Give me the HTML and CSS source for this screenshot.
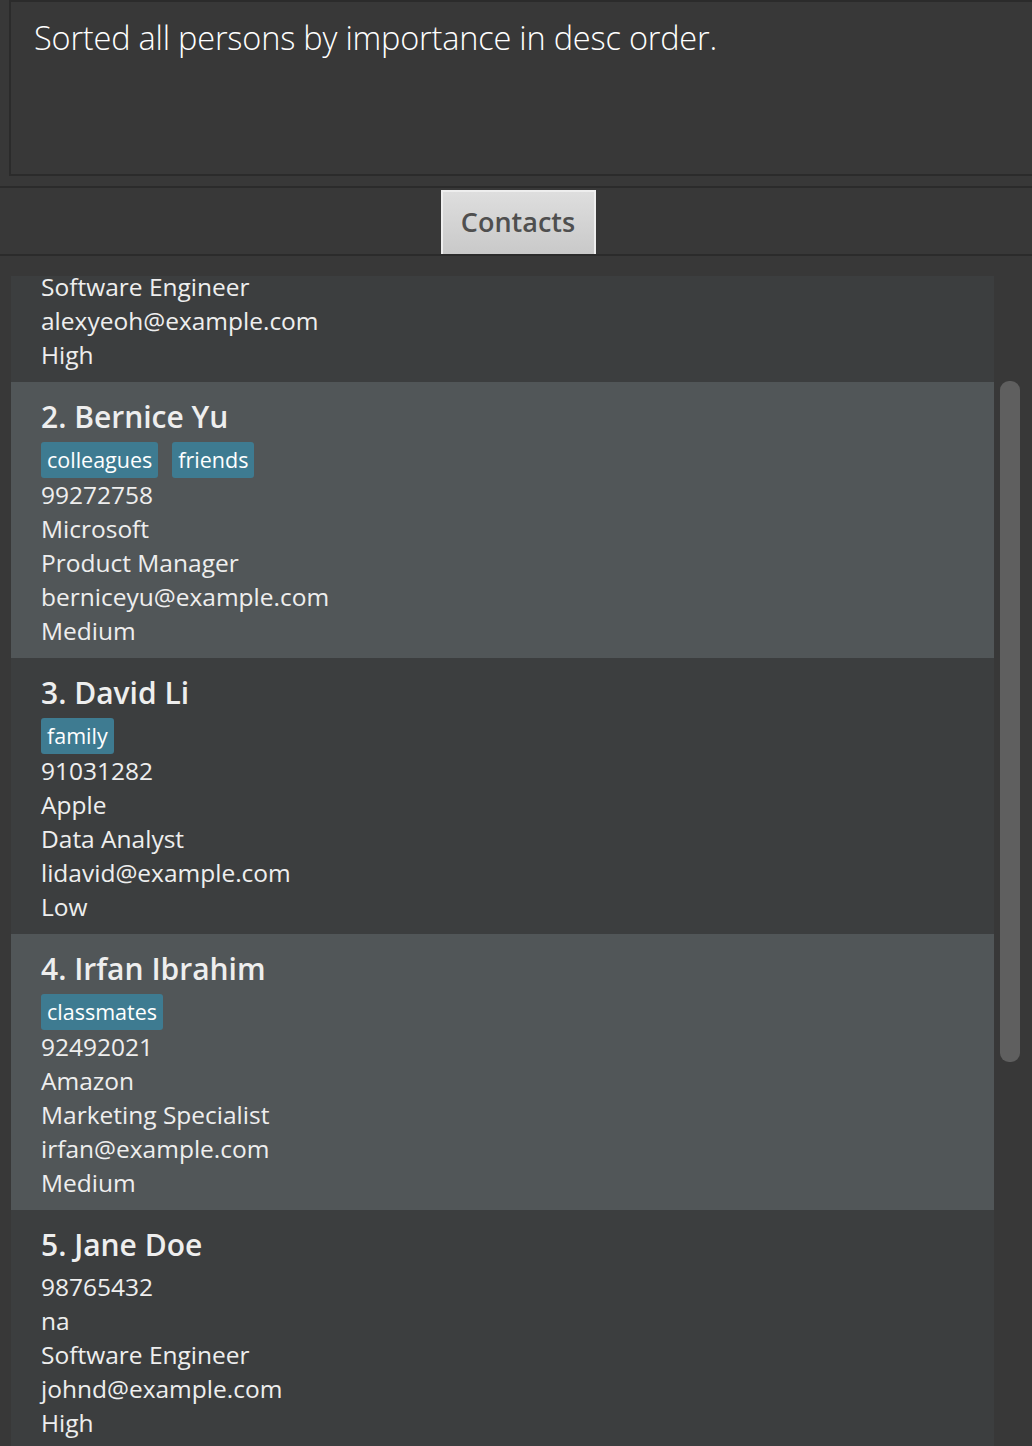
FILE: index.html
```html
<!DOCTYPE html>
<html>
<head>
<meta charset="utf-8">
<link rel="stylesheet" href="styles.css">
</head>
<body>
<div class="app">
  <div class="result-wrap">
    <div class="result">Sorted all persons by importance in desc order.</div>
  </div>
  <div class="tabbar">
    <div class="tab">Contacts</div>
  </div>
  <div class="list-area">
    <div class="list">
      <div class="card dark partial">
        <div class="line">Software Engineer</div>
        <div class="line">alexyeoh@example.com</div>
        <div class="line">High</div>
      </div>
      <div class="card light">
        <div class="name">2. Bernice Yu</div>
        <div class="details">
          <div class="tags"><span class="tag">colleagues</span><span class="tag">friends</span></div>
          <div class="line">99272758</div>
          <div class="line">Microsoft</div>
          <div class="line">Product Manager</div>
          <div class="line">berniceyu@example.com</div>
          <div class="line">Medium</div>
        </div>
      </div>
      <div class="card dark">
        <div class="name">3. David Li</div>
        <div class="details">
          <div class="tags"><span class="tag">family</span></div>
          <div class="line">91031282</div>
          <div class="line">Apple</div>
          <div class="line">Data Analyst</div>
          <div class="line">lidavid@example.com</div>
          <div class="line">Low</div>
        </div>
      </div>
      <div class="card light">
        <div class="name">4. Irfan Ibrahim</div>
        <div class="details">
          <div class="tags"><span class="tag">classmates</span></div>
          <div class="line">92492021</div>
          <div class="line">Amazon</div>
          <div class="line">Marketing Specialist</div>
          <div class="line">irfan@example.com</div>
          <div class="line">Medium</div>
        </div>
      </div>
      <div class="card dark">
        <div class="name">5. Jane Doe</div>
        <div class="details">
          <div class="line">98765432</div>
          <div class="line">na</div>
          <div class="line">Software Engineer</div>
          <div class="line">johnd@example.com</div>
          <div class="line">High</div>
        </div>
      </div>
    </div>
    <div class="scroll-track">
      <div class="thumb"></div>
    </div>
  </div>
</div>
</body>
</html>
```
FILE: styles.css
```css
html, body {
  margin: 0;
  padding: 0;
  background: #383838;
  height: 100%;
  overflow: hidden;
}
.app {
  width: 1032px;
  height: 1446px;
  display: flex;
  flex-direction: column;
  font-family: "Open Sans", "Noto Sans", sans-serif;
  color: #eeeeee;
}
.result-wrap {
  padding-left: 9px;
  height: 176px;
  box-sizing: border-box;
}
.result {
  height: 176px;
  box-sizing: border-box;
  border: 2px solid #2b2b2b;
  border-right: none;
  background: #383838;
  padding: 13px 0 0 23px;
  font-size: 32.5px;
  font-weight: 300;
  color: #ffffff;
  letter-spacing: -0.2px;
}
.tabbar {
  margin-top: 10px;
  height: 70px;
  box-sizing: border-box;
  border-top: 2px solid #2b2b2b;
  border-bottom: 2px solid #2b2b2b;
  display: flex;
  justify-content: center;
  padding-top: 2px;
}
.tab {
  width: 155px;
  height: 64px;
  box-sizing: border-box;
  border: 2px solid #eeeeee;
  border-bottom: none;
  background: linear-gradient(#dedede, #c9c9c9);
  color: #4f4f4f;
  font-size: 27px;
  font-weight: 600;
  display: flex;
  align-items: center;
  justify-content: center;
  padding-bottom: 4px;
  margin-left: 4px;
}
.list-area {
  flex: 1;
  display: flex;
  overflow: hidden;
  padding-top: 20px;
  padding-left: 11px;
}
.list {
  width: 983px;
  display: flex;
  flex-direction: column;
}
.card {
  padding: 15px 0 10px 30px;
  font-size: 24.5px;
  flex-shrink: 0;
}
.card.partial {
  padding: 0 0 10px 30px;
}
.card.partial .line:first-child {
  margin-top: -6px;
}
.dark { background: #3c3e3f; }
.light { background: #515658; }
.name {
  height: 40px;
  line-height: 40px;
  font-size: 30px;
  font-weight: 600;
  color: #eeeeee;
}
.details {
  padding-top: 5px;
}
.tags {
  display: flex;
  gap: 14px;
  height: 36px;
}
.tag {
  background: #3e7b91;
  color: #ffffff;
  font-size: 21.5px;
  line-height: 36px;
  padding: 0 6px;
  border-radius: 3px;
}
.line {
  height: 34px;
  line-height: 34px;
  color: #eeeeee;
}
.scroll-track {
  flex: 1;
  position: relative;
  padding-left: 6px;
  padding-top: 105px;
}
.thumb {
  width: 20px;
  height: 681px;
  background: #5f5f5f;
  border-radius: 9px;
}
```
